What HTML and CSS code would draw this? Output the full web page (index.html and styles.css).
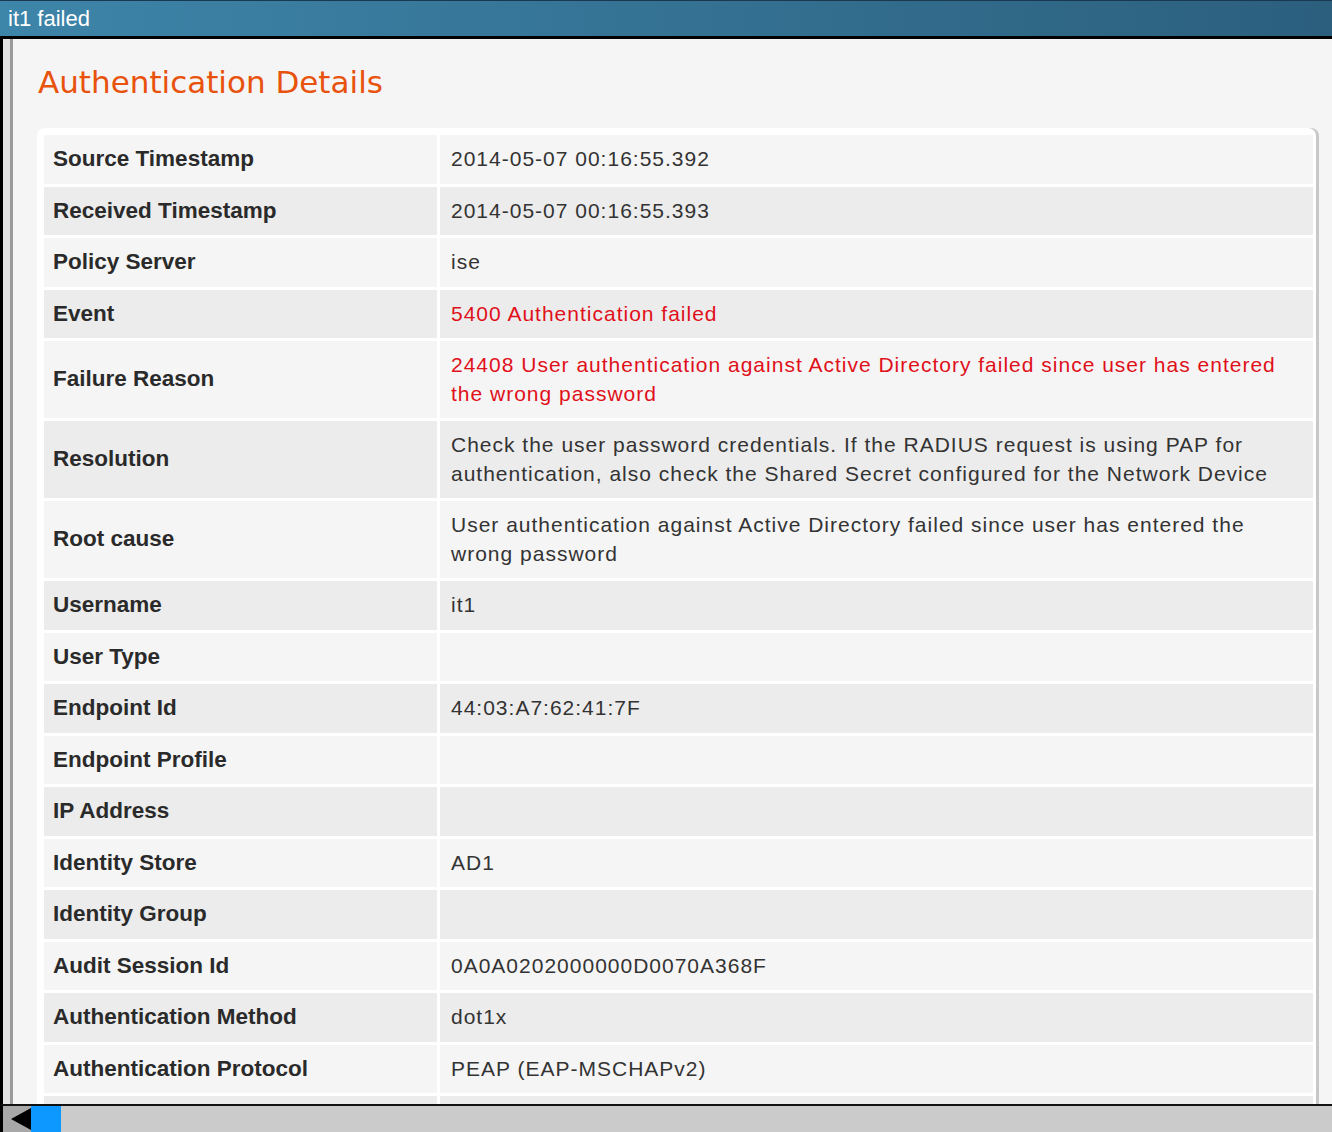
FILE: index.html
```html
<!DOCTYPE html>
<html>
<head>
<meta charset="utf-8">
<title>it1 failed</title>
<link rel="stylesheet" href="styles.css">
</head>
<body>
<div class="window">
  <div class="titlebar">it1 failed</div>
  <div class="frame">
    <div class="gutter"></div>
    <div class="content">
      <h1 class="heading">Authentication Details</h1>
      <div class="card">
        <table class="details">
          <tr><th>Source Timestamp</th><td>2014-05-07 00:16:55.392</td></tr>
          <tr><th>Received Timestamp</th><td>2014-05-07 00:16:55.393</td></tr>
          <tr><th>Policy Server</th><td>ise</td></tr>
          <tr><th>Event</th><td class="err">5400 Authentication failed</td></tr>
          <tr><th>Failure Reason</th><td class="err">24408 User authentication against Active Directory failed since user has entered the wrong password</td></tr>
          <tr><th>Resolution</th><td>Check the user password credentials. If the RADIUS request is using PAP for authentication, also check the Shared Secret configured for the Network Device</td></tr>
          <tr><th>Root cause</th><td>User authentication against Active Directory failed since user has entered the wrong password</td></tr>
          <tr><th>Username</th><td>it1</td></tr>
          <tr><th>User Type</th><td></td></tr>
          <tr><th>Endpoint Id</th><td>44:03:A7:62:41:7F</td></tr>
          <tr><th>Endpoint Profile</th><td></td></tr>
          <tr><th>IP Address</th><td></td></tr>
          <tr><th>Identity Store</th><td>AD1</td></tr>
          <tr><th>Identity Group</th><td></td></tr>
          <tr><th>Audit Session Id</th><td>0A0A0202000000D0070A368F</td></tr>
          <tr><th>Authentication Method</th><td>dot1x</td></tr>
          <tr><th>Authentication Protocol</th><td>PEAP (EAP-MSCHAPv2)</td></tr>
          <tr class="hidden-row"><th></th><td></td></tr>
        </table>
      </div>
    </div>
  </div>
  <div class="hscroll">
    <div class="scroll-btn"><span class="arrow-left"></span></div>
    <div class="scroll-thumb"></div>
    <div class="scroll-track"></div>
  </div>
</div>
</body>
</html>
```
FILE: styles.css
```css
html, body {
  margin: 0;
  padding: 0;
  background: #f5f5f5;
}
.window {
  width: 1332px;
  height: 1132px;
  display: flex;
  flex-direction: column;
  overflow: hidden;
}
.titlebar {
  height: 35px;
  border-top: 1px solid #1a3850;
  background: linear-gradient(to right, #3d85a9, #2c5f7e);
  color: #fff;
  font-family: "Liberation Sans", Arial, sans-serif;
  font-size: 22px;
  line-height: 35px;
  padding-left: 8px;
  border-bottom: 3px solid #000;
  flex: none;
}
.frame {
  flex: 1;
  display: flex;
  border-left: 3px solid #000;
  min-height: 0;
}
.gutter {
  width: 7px;
  background: #e4e4e4;
  border-right: 3px solid #9a9a9a;
  flex: none;
}
.content {
  flex: 1;
  overflow: hidden;
  background: #f5f5f5;
  padding-left: 24px;
  padding-right: 16px;
}
.heading {
  margin: 25px 0 27px 1px;
  font-family: "DejaVu Sans", Verdana, sans-serif;
  font-weight: normal;
  font-size: 31px;
  line-height: 37px;
  color: #e8520c;
}
.card {
  background: #fff;
  border-radius: 8px 8px 0 0;
  padding: 4px 0 0 4px;
  box-shadow: 3px 0 0 #c8c8c8;
}
.details {
  width: 100%;
  border-collapse: separate;
  border-spacing: 3px;
}
.details th,
.details td {
  padding: 10px 10px 10px 9px;
  line-height: 28.5px;
  height: 28.5px;
  vertical-align: middle;
  text-align: left;
}
.details th {
  width: 374px;
  font-family: "Liberation Sans", Arial, sans-serif;
  font-weight: bold;
  font-size: 22.5px;
  color: #2a2a2a;
}
.details td {
  padding-left: 11px;
  font-family: "Liberation Sans", Arial, sans-serif;
  font-size: 21px;
  letter-spacing: 1px;
  color: #333;
}
.details td.err {
  color: #e0101a;
}
.details tr:nth-child(odd) th,
.details tr:nth-child(odd) td {
  background: #f5f5f5;
}
.details tr:nth-child(even) th,
.details tr:nth-child(even) td {
  background: #ececec;
}
.hscroll {
  height: 26px;
  flex: none;
  display: flex;
  border-top: 2px solid #111;
  border-left: 3px solid #000;
  background: #cbcbcb;
}
.scroll-btn {
  width: 28px;
  background: #a8a8a8;
  display: flex;
  align-items: center;
  justify-content: flex-end;
}
.arrow-left {
  width: 0;
  height: 0;
  border-top: 11px solid transparent;
  border-bottom: 11px solid transparent;
  border-right: 20px solid #000;
}
.scroll-thumb {
  width: 30px;
  background: #0d98ff;
}
.scroll-track {
  flex: 1;
}
```
